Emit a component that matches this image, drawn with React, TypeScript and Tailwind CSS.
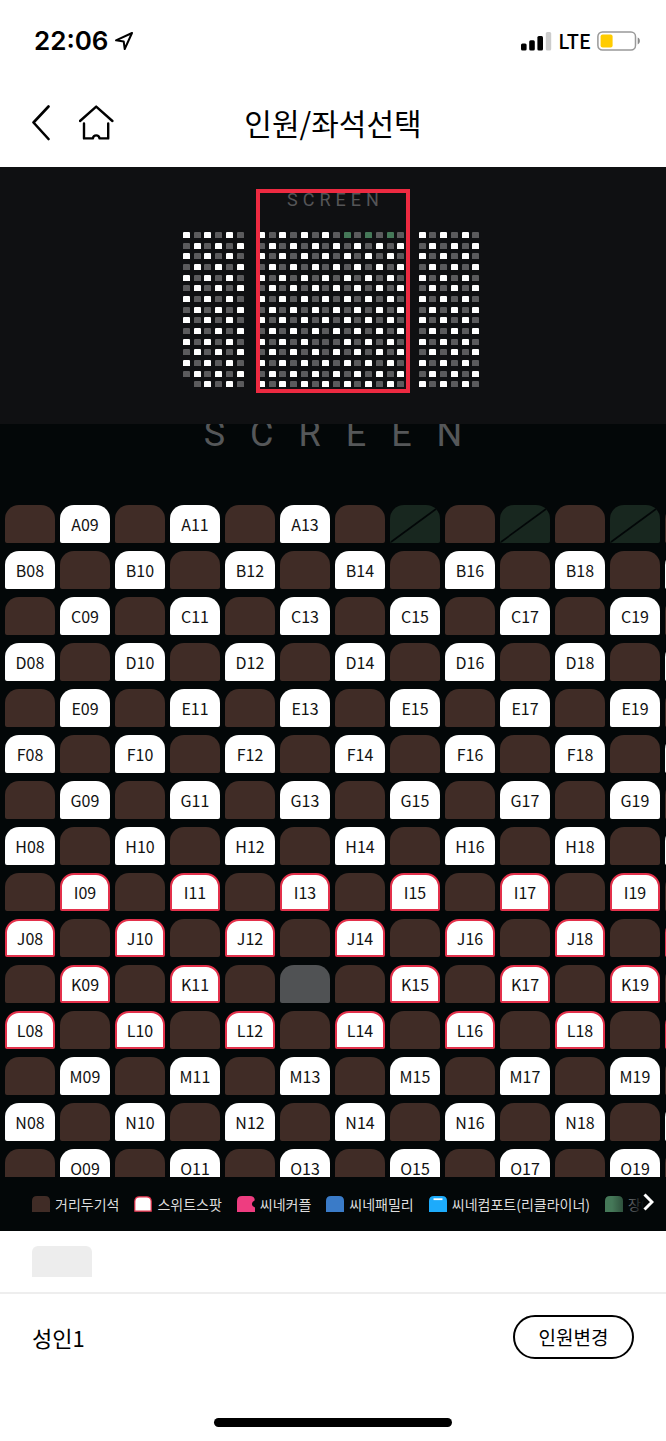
import React from "react";

type SeatKind = "open" | "sweet" | "distance" | "accessible" | "sold" | "none";

const ROWS = "ABCDEFGHIJKLMNO".split("");
const SWEET_ROWS = ["I", "J", "K", "L"];
const LAST_LABELLED_SEAT = 19;
const range = (from: number, to: number) =>
  Array.from({ length: to - from + 1 }, (_, i) => from + i);

function seatKind(row: string, num: number): SeatKind {
  const rowIndex = ROWS.indexOf(row);
  if (row === "O" && num === 1) return "none";
  if (row === "A" && [15, 17, 19].includes(num)) return "accessible";
  if (row === "K" && num === 13) return "sold";
  if ((rowIndex + num) % 2 === 0) return "distance";
  return SWEET_ROWS.includes(row) && num > 6 && num < 21 ? "sweet" : "open";
}

function StatusBar() {
  return (
    <div className="flex h-[82px] items-center justify-between pr-[25px] pl-[34px]">
      <div className="flex items-center gap-[6px]">
        <span className="font-['Inter',sans-serif] text-[26px] leading-8 font-semibold">22:06</span>
        <svg width="20" height="20" viewBox="0 0 20 20" fill="none" stroke="#000" strokeWidth="2" strokeLinejoin="round">
          <path d="M18 2 L2 9.3 L9.7 10.4 L10.7 18 Z" />
        </svg>
      </div>
      <div className="flex items-center gap-[6px]">
        <svg width="31" height="20" viewBox="0 0 31 20">
          <rect x="0" y="12.5" width="5.6" height="7" rx="1.5" />
          <rect x="8.2" y="9.2" width="5.6" height="10.3" rx="1.5" />
          <rect x="16.4" y="5" width="5.6" height="14.5" rx="1.5" />
          <rect x="24.8" y="1" width="5.4" height="18.5" rx="1.5" fill="#ccc" />
        </svg>
        <span className="text-[20px] leading-6 font-medium">LTE</span>
        <svg width="44" height="20" viewBox="0 0 44 20">
          <rect x="0.9" y="0.9" width="37.6" height="18.2" rx="4.5" fill="none" stroke="#999" strokeWidth="1.5" />
          <rect x="3.6" y="3.4" width="12" height="13.2" rx="2" fill="#fc0" />
          <path d="M40.7 6.6 C43.6 7.6 43.6 12.4 40.7 13.4 Z" fill="#888" />
        </svg>
      </div>
    </div>
  );
}

function Header() {
  return (
    <header className="grid h-[85px] grid-cols-[1fr_auto_1fr] items-center px-8 pb-1">
      <div className="flex items-center gap-[28px]">
        <button aria-label="뒤로">
          <svg width="19" height="36" viewBox="0 0 19 36" fill="none" stroke="#000" strokeWidth="2.6" strokeLinecap="round" strokeLinejoin="round">
            <path d="M16.5 1.5 L1.5 17.5 L16.5 34" />
          </svg>
        </button>
        <button aria-label="홈">
          <svg width="36" height="36" viewBox="0 0 36 36" fill="none" stroke="#000" strokeWidth="2.4" strokeLinecap="round" strokeLinejoin="round">
            <path d="M1 16 L17.2 1.6 L33.4 16" />
            <path d="M5 18.5 V33.4 H13.8 C14.6 29.4 19.8 29.4 20.6 33.4 H29.2 V18.5" />
          </svg>
        </button>
      </div>
      <h1 className="pb-[2px] text-[30px] leading-10 font-normal">인원/좌석선택</h1>
    </header>
  );
}

const MINI_COLORS: Record<SeatKind, string> = {
  open: "bg-white",
  sweet: "bg-white",
  distance: "bg-[#5b5b5d]",
  sold: "bg-[#5b5b5d]",
  accessible: "bg-[#457858]",
  none: "bg-transparent",
};

function MiniMap() {
  const slots: (number | null)[] = [...range(1, 6), null, ...range(7, 20), null, ...range(21, 26)];
  return (
    <section className="bg-[#0f1012] pt-[21px] pb-8">
      <div className="relative mx-auto w-[300px]">
        <p className="pl-[5px] text-center font-['Roboto',sans-serif] text-[18px] leading-6 tracking-[5px] text-[#555557]">
          SCREEN
        </p>
        <div className="mt-5 grid h-[160px] grid-cols-[repeat(28,minmax(0,1fr))] grid-rows-[repeat(15,minmax(0,1fr))]">
          {ROWS.map((row) =>
            slots.map((num, i) => (
              <span
                key={row + i}
                className={`h-[6px] w-[7px] rounded-t-[1px] ${num === null ? "bg-transparent" : MINI_COLORS[seatKind(row, num)]}`}
              />
            ))
          )}
        </div>
        <div className="absolute top-[1px] left-[73px] h-[204px] w-[154px] border-4 border-[#ed2a41]" />
      </div>
    </section>
  );
}

const SEAT_STYLES: Record<SeatKind, string> = {
  open: "bg-white",
  sweet: "border-2 border-[#e3314b] bg-white",
  distance: "bg-[#402c26]",
  sold: "bg-[#505254]",
  accessible: "bg-[#18271f]",
  none: "invisible",
};

function Seat({ row, num }: { row: string; num: number }) {
  const kind = seatKind(row, num);
  const label = row + String(num).padStart(2, "0");
  const available = kind === "open" || kind === "sweet";
  return (
    <button
      disabled={!available}
      aria-label={label}
      className={`flex h-[38px] w-[50px] items-center justify-center overflow-hidden rounded-t-[14px] rounded-b-[2px] text-[16px] leading-6 text-[#111] ${SEAT_STYLES[kind]}`}
    >
      {available && num <= LAST_LABELLED_SEAT && label}
      {kind === "accessible" && (
        <svg width="50" height="38" viewBox="0 0 50 38" stroke="#030708" strokeWidth="1.6">
          <path d="M1 37 L46 4" />
        </svg>
      )}
    </button>
  );
}

function SeatMap() {
  return (
    <section className="overflow-hidden">
      <p className="-mt-2 pl-[25px] text-center font-['Roboto',sans-serif] text-[36px] leading-9 tracking-[25px] text-[#555759]">
        SCREEN
      </p>
      <div className="mt-[53px] -mb-[10px] ml-[5px] grid w-max grid-cols-[repeat(13,50px)] gap-x-[5px] gap-y-2">
        {ROWS.map((row) => range(8, 20).map((num) => <Seat key={row + num} row={row} num={num} />))}
      </div>
    </section>
  );
}

function LegendIcon({ type }: { type: string }) {
  const body = "M0 16 V5 Q0 0 5 0 H13 Q18 0 18 5 V16 Z";
  return (
    <svg className="shrink-0" width="18" height="16" viewBox="0 0 18 16">
      {type === "distance" && <path d={body} fill="#402c26" />}
      {type === "sweet" && (
        <path d="M0.8 15.2 V5.5 Q0.8 0.8 5.5 0.8 H12.5 Q17.2 0.8 17.2 5.5 V15.2 Z" fill="#fff" stroke="#e3314b" strokeWidth="1.2" />
      )}
      {type === "couple" && (
        <path d="M0 16 V5 Q0 0 5 0 H13 Q17.4 0 17.8 4.2 L15.6 6 Q14.2 8 15.6 10 L18 11.6 V16 Z" fill="#ee3d80" />
      )}
      {type === "family" && <path d={body} fill="#3a7bc8" />}
      {type === "comfort" && (
        <>
          <path d={body} fill="#1dabfb" />
          <path d="M4.5 3.2 H13.5" stroke="#fff" strokeWidth="1.8" />
        </>
      )}
      {type === "accessible" && <path d={body} fill="#457858" />}
    </svg>
  );
}

const LEGEND = [
  { type: "distance", label: "거리두기석" },
  { type: "sweet", label: "스위트스팟" },
  { type: "couple", label: "씨네커플" },
  { type: "family", label: "씨네패밀리" },
  { type: "comfort", label: "씨네컴포트(리클라이너)" },
  { type: "accessible", label: "장애인석" },
];

function Legend() {
  return (
    <section className="relative h-[54px] overflow-hidden">
      <ul className="flex h-full w-max items-center gap-[15px] pl-8">
        {LEGEND.map((item) => (
          <li key={item.type} className="flex items-center gap-[5px] text-[14px] leading-5 whitespace-nowrap text-[#dedede]">
            <LegendIcon type={item.type} />
            {item.label}
          </li>
        ))}
      </ul>
      <div className="absolute inset-y-0 right-0 flex w-[54px] items-center justify-end bg-linear-to-r from-transparent to-[#030708] to-60% pr-3">
        <button aria-label="다음" className="-mt-1">
          <svg width="11" height="18" viewBox="0 0 11 18" fill="none" stroke="#fff" strokeWidth="3">
            <path d="M1.5 1.5 L9 9 L1.5 16.5" />
          </svg>
        </button>
      </div>
    </section>
  );
}

function Footer() {
  return (
    <footer>
      <div className="border-b-2 border-[#eee] px-8 py-[15px]">
        <div className="h-[31px] w-[60px] rounded-t-[6px] bg-[#ededed]" />
      </div>
      <div className="flex items-center justify-between px-8 pt-[21px]">
        <span className="text-[22px] leading-8">성인1</span>
        <button className="h-[44px] w-[121px] rounded-full border-2 border-black text-[19px] leading-7">인원변경</button>
      </div>
      <div className="mx-auto mt-[59px] mb-[14px] h-[9px] w-[238px] rounded-full bg-black" />
    </footer>
  );
}

export default function App() {
  return (
    <div className="flow-root bg-white font-['Noto_Sans_CJK_KR',sans-serif] text-black">
      <StatusBar />
      <Header />
      <main className="bg-[#030708]">
        <MiniMap />
        <SeatMap />
        <Legend />
      </main>
      <Footer />
    </div>
  );
}
